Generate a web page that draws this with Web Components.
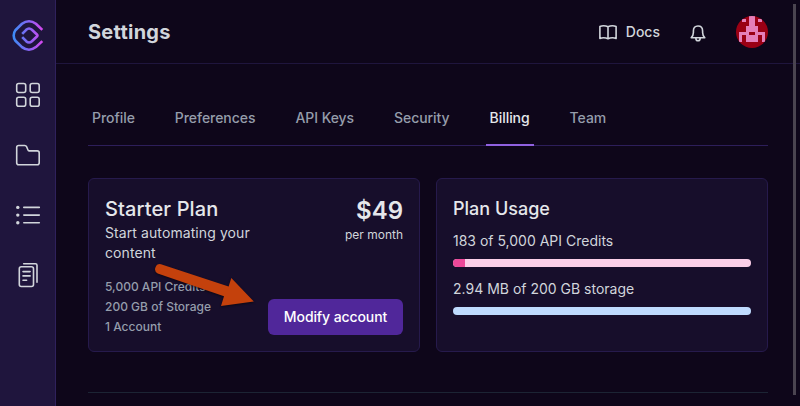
<!DOCTYPE html>
<html lang="en"><head><meta charset="utf-8"><title>Settings</title>
<style>
html,body{margin:0;height:100%;overflow:hidden;background:#0e061a}
body{font-family:Inter,"Liberation Sans",sans-serif;font-size:14px;line-height:20px;color:#d1d5db}
</style></head><body>
<settings-page></settings-page>
<script>
const define=(name,html)=>customElements.define(name,class extends HTMLElement{
  constructor(){super();const t=document.createElement('template');t.innerHTML=html;
    this.attachShadow({mode:'open'}).append(t.content.cloneNode(true));}
});

define('side-nav',`<style>
:host{display:flex;flex-direction:column;align-items:center;box-sizing:border-box;width:56px;height:100%;background:#1f153d;border-right:1px solid #2f215c;padding-top:19px;flex:none}
svg{display:block;fill:none;stroke:#d1d5db;stroke-width:1.6;stroke-linecap:round;stroke-linejoin:round}
nav{display:flex;flex-direction:column;gap:32px;margin-top:29px}
</style>
<svg width="32" height="33" viewBox="0 0 32 33" style="stroke-width:2.6"><defs><linearGradient id="g" gradientUnits="userSpaceOnUse" x1="1" y1="0" x2="31" y2="0"><stop offset="0" stop-color="#3b8cf5"/><stop offset=".5" stop-color="#8266f5"/><stop offset="1" stop-color="#d946ef"/></linearGradient></defs>
<g stroke="url(#g)" stroke-linecap="butt"><path d="M30.300 10.900 23.900 4.800Q20.600 2.200 17 2.200T10 4.800L3.400 11.300Q1.700 13.600 1.700 16.500T3.400 21.700L10 28.100Q13.400 30.700 17 30.700T23.900 28.100L30.300 22.100"/><path d="M10.200 14.900 14.200 10.800Q17 8.200 19.900 10.800L24.900 15.500Q25.900 16.500 24.900 17.500L19.900 22.200Q17 24.800 14.200 22.200L10.200 18.100"/></g></svg>
<nav>
<svg width="28" height="28" viewBox="0 0 28 28"><rect x="2.700" y="2.500" width="9" height="9" rx="2"/><rect x="16.200" y="2.500" width="9" height="9" rx="2"/><rect x="2.700" y="16.200" width="9" height="9" rx="2"/><rect x="16.200" y="16.200" width="9" height="9" rx="2"/></svg>
<svg width="28" height="28" viewBox="0 0 28 28"><path d="M4.700 4.500H10.700Q12 4.500 12.600 5.700L14 9Q14.300 9.900 15 9.900H23.200Q25.200 9.900 25.200 11.900V21.700Q25.200 23.700 23.200 23.700H4.700Q2.700 23.700 2.700 21.700V6.500Q2.700 4.500 4.700 4.500Z"/></svg>
<svg width="28" height="28" viewBox="0 0 28 28"><path d="M9.800 6.400H25.300M9.800 14.100H25.300M9.800 21.700H25.300"/><g fill="#d1d5db" stroke="none"><circle cx="3.800" cy="6.400" r="1.700"/><circle cx="3.800" cy="14.100" r="1.700"/><circle cx="3.800" cy="21.700" r="1.700"/></g></svg>
<svg width="28" height="28" viewBox="0 0 28 28"><rect x="5.300" y="5.700" width="14.200" height="19.800" rx="2"/><path d="M9.700 2.700H21.400Q23 2.700 23 4.300V21.300M9 10.600H16.100M9 14.900H16.100M9 19.200H12.600"/></svg>
</nav>`);

define('user-avatar',`<style>:host{display:block;width:32px;height:32px;border-radius:50%;overflow:hidden;background:#9a0014}svg{display:block}</style>
<svg width="32" height="32" viewBox="0 0 10 10" shape-rendering="crispEdges"><path fill="#e57fba" fill-rule="evenodd" d="M2 1h1v1H2zM7 1h1v1H7zM4 0h2v3h1v2h2v3H8V6H7v2H3V6H2v2H1V5h2V3h1zM4 5v1h2V5z"/></svg>`);

define('top-bar',`<style>
:host{display:flex;align-items:center;box-sizing:border-box;height:64px;border-bottom:1px solid #1f153d;padding:0 32px;flex:none}
h1{margin:0;font-size:20px;line-height:28px;font-weight:700;letter-spacing:.25px;flex:1}
.docs{display:flex;align-items:center;gap:8px;font-weight:500}
svg{display:block;fill:none;stroke:#d1d5db;stroke-width:1.6;stroke-linecap:round;stroke-linejoin:round}
.bell{margin:3px 28px 0 28px}
</style>
<h1><slot></slot></h1>
<div class="docs"><svg width="20" height="20" viewBox="0 0 20 20"><path d="M10 4.700Q8 3.700 5.500 3.700 3.600 3.700 1.900 4.400V16.400Q3.600 15.700 5.500 15.700 8 15.700 10 16.700 12 15.700 14.500 15.700 16.400 15.700 18.100 16.400V4.400Q16.400 3.700 14.500 3.700 12 3.700 10 4.700ZM10 4.700V16.700"/></svg><span>Docs</span></div>
<svg class="bell" width="20" height="20" viewBox="0 0 20 20"><path d="M3.200 14.700Q5.400 12.400 5.400 9.500V8Q5.400 3 10 3T14.600 8V9.500Q14.600 12.400 16.800 14.700ZM7.800 14.900Q7.800 17.800 10 17.800T12.200 14.900"/></svg>
<user-avatar></user-avatar>`);

define('nav-tabs',`<style>:host{display:flex;gap:32px;height:57px;box-sizing:border-box;border-bottom:1px solid #2d1e5a}</style><slot></slot>`);
define('nav-tab',`<style>
:host{display:block;box-sizing:border-box;padding:19px 4px 0;height:57px;font-weight:500;letter-spacing:-.055px;color:#959dab;white-space:nowrap;border-bottom:2px solid transparent}
:host([active]){color:#e5e7eb;border-color:#9061e0}
</style><slot></slot>`);

define('ui-card',`<style>:host{display:block;box-sizing:border-box;height:174px;background:#170e2b;border:1px solid #261a4c;border-radius:6px;padding:16px}</style><slot></slot>`);

define('ui-button',`<style>:host{display:flex;align-items:center;justify-content:center;box-sizing:border-box;width:135px;height:36px;border-radius:6px;background:#50279a;color:#fff;font-weight:500;letter-spacing:-.1px;white-space:nowrap}</style><slot></slot>`);

define('plan-summary',`<style>
:host{display:grid;grid-template-columns:1fr auto;height:100%;position:relative}
h2{margin:0;font-size:20px;line-height:28px;font-weight:500;letter-spacing:.12px;color:#e5e7eb}
.desc{width:165px;letter-spacing:.09px}
.price{text-align:right;color:#e5e7eb;font-size:24px;line-height:32px;font-weight:600}
.per{text-align:right;font-size:12px;line-height:16px}
.list{font-size:12px;font-weight:500;color:#959dab;line-height:20px;margin-bottom:-2px}
.foot{grid-column:1/3;display:flex;justify-content:space-between;align-items:flex-end}
.arrow{position:absolute;left:45px;top:64px;filter:drop-shadow(0 1px 1px #0008);overflow:visible}
</style>
<div><h2>Starter Plan</h2><div class="desc">Start automating your content</div></div>
<div><div class="price">$49</div><div class="per">per month</div></div>
<div class="foot"><div class="list"><div>5,000 API Credits</div><div>200 GB of Storage</div><div>1 Account</div></div><ui-button>Modify account</ui-button></div>
<svg class="arrow" width="110" height="50" viewBox="150 259 110 50"><path d="M161 264.200 228.600 286.500 231.300 278 253.800 301.500 221 306 224 296.300 157.700 273.500A5 5 0 0 1 161 264.200Z" fill="#c4410c"/></svg>`);

customElements.define('usage-meter',class extends HTMLElement{
  constructor(){super();this.attachShadow({mode:'open'}).innerHTML=`<style>
:host{display:block;height:48px}.track{height:8px;margin-top:8px;border-radius:4px;overflow:hidden;background:${this.getAttribute('track')}}
.fill{height:100%;width:${this.getAttribute('value')}%;background:#ec4899}</style><slot></slot><div class="track"><div class="fill"></div></div>`;}
});

define('plan-usage',`<style>:host{display:block}h2{margin:0 0 8px;font-size:18px;line-height:28px;font-weight:500;color:#e5e7eb}</style>
<h2>Plan Usage</h2>
<usage-meter track="#fbcfe8" value="4">183 of 5,000 API Credits</usage-meter>
<usage-meter track="#bfdbfe" value="0">2.94 MB of 200 GB storage</usage-meter>`);

define('settings-page',`<style>
:host{display:flex;width:800px;height:406px;overflow:hidden}
.main{flex:1;display:flex;flex-direction:column;min-width:0}
.content{padding:25px 32px 0}
.cards{display:grid;grid-template-columns:1fr 1fr;gap:16px;margin:32px 0 40px}
hr{margin:0;border:0;height:1px;background:#1c2434}
.scroll{position:absolute;left:793px;top:4px;width:3px;height:391px;background:#4a4450}
</style>
<side-nav></side-nav>
<div class="main"><top-bar>Settings</top-bar>
<div class="content">
<nav-tabs><nav-tab>Profile</nav-tab><nav-tab>Preferences</nav-tab><nav-tab>API Keys</nav-tab><nav-tab>Security</nav-tab><nav-tab active>Billing</nav-tab><nav-tab>Team</nav-tab></nav-tabs>
<div class="cards"><ui-card><plan-summary></plan-summary></ui-card><ui-card><plan-usage></plan-usage></ui-card></div><hr>
</div></div><div class="scroll"></div>`);
</script></body></html>
